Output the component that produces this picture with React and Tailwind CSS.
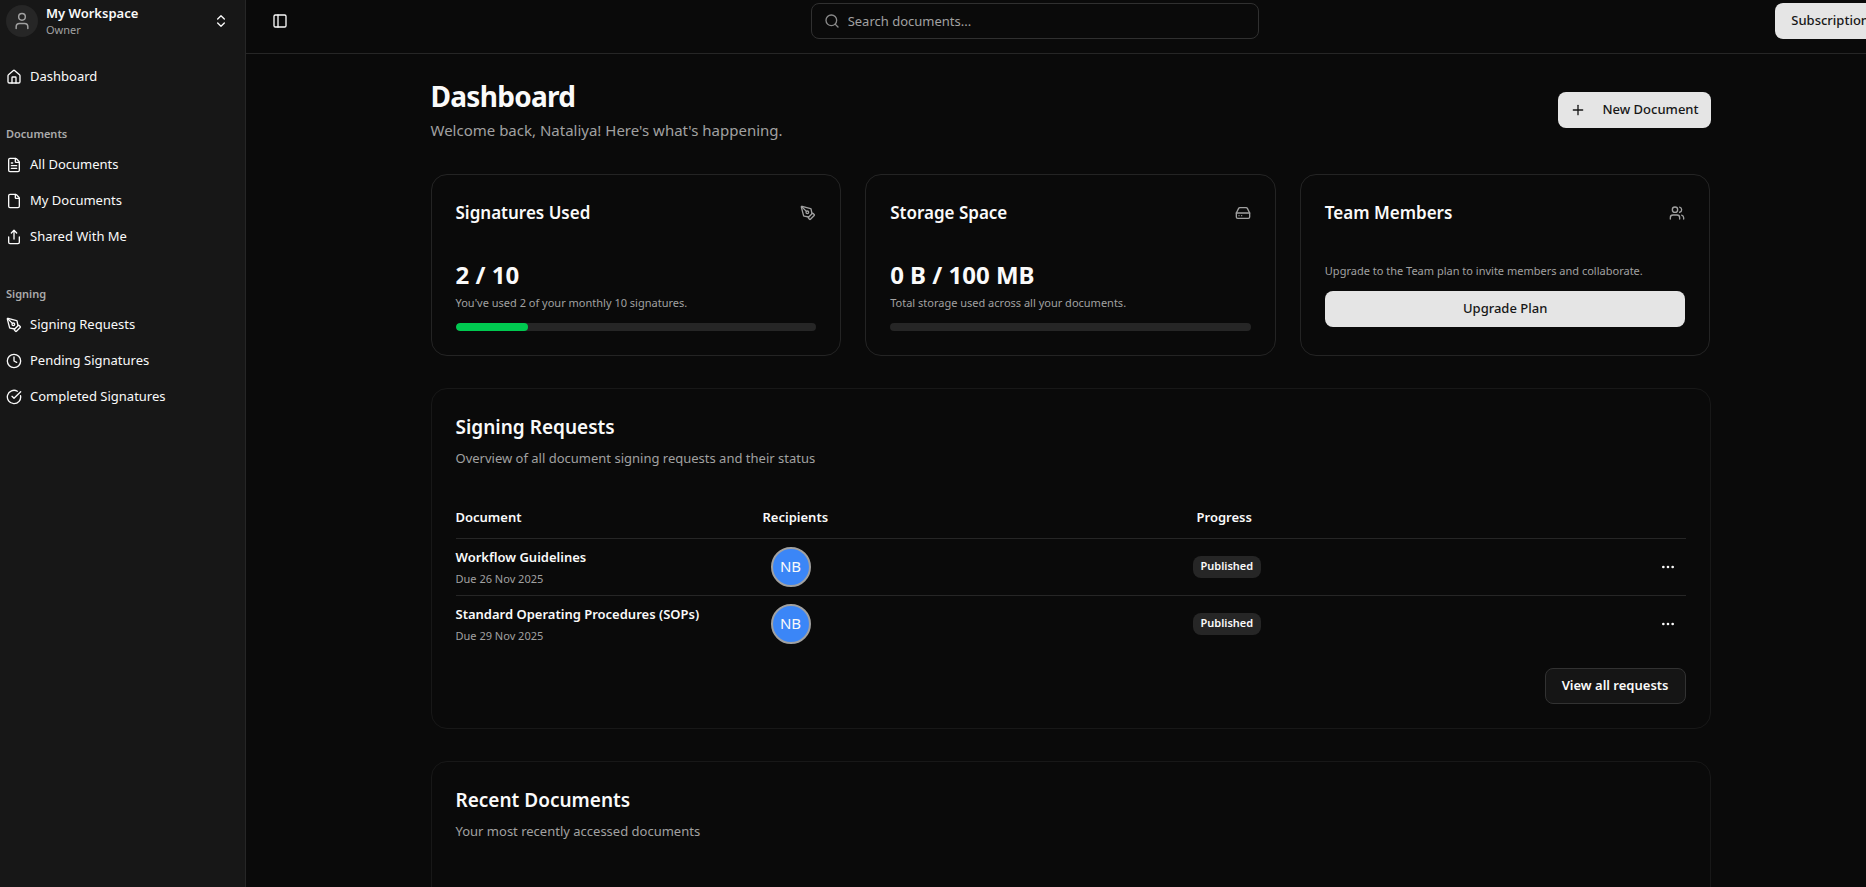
import React from "react";
import {
  ChevronsUpDown,
  CircleCheckBig,
  Clock,
  Ellipsis,
  File,
  FileText,
  HardDrive,
  House,
  PanelLeft,
  PenTool,
  Plus,
  Search,
  Share,
  User,
  Users,
} from "lucide-react";

const navGroups = [
  { label: "", items: [{ name: "Dashboard", icon: House }] },
  {
    label: "Documents",
    items: [
      { name: "All Documents", icon: FileText },
      { name: "My Documents", icon: File },
      { name: "Shared With Me", icon: Share },
    ],
  },
  {
    label: "Signing",
    items: [
      { name: "Signing Requests", icon: PenTool },
      { name: "Pending Signatures", icon: Clock },
      { name: "Completed Signatures", icon: CircleCheckBig },
    ],
  },
];

const requests = [
  { id: 1, name: "Workflow Guidelines", due: "26 Nov 2025", recipient: "NB", status: "Published" },
  { id: 2, name: "Standard Operating Procedures (SOPs)", due: "29 Nov 2025", recipient: "NB", status: "Published" },
];

function Sidebar() {
  return (
    <aside className="w-[246px] shrink-0 border-r border-[#262626] bg-[#171717] px-1.5 text-neutral-50">
      <button type="button" className="flex w-full items-center gap-2 pt-1 pr-2.5 text-left">
        <span className="flex size-8 items-center justify-center rounded-full bg-[#262626]">
          <User className="size-5 text-[#a1a1a1]" strokeWidth={1.75} />
        </span>
        <span className="flex-1">
          <span className="block text-[13px] leading-[18px] font-semibold">My Workspace</span>
          <span className="block text-[11px] leading-4 text-[#a1a1a1]">Owner</span>
        </span>
        <ChevronsUpDown className="size-4" />
      </button>

      <nav className="mt-[21px] flex flex-col gap-[26px]">
        {navGroups.map((group) => (
          <div key={group.label}>
            {group.label && (
              <h2 className="h-[26px] text-[11px] leading-[26px] font-semibold text-[#ababab]">{group.label}</h2>
            )}
            <ul>
              {group.items.map(({ name, icon: Icon }) => (
                <li key={name}>
                  <a href="#" className="flex h-9 items-center gap-2 text-[13px]">
                    <Icon className="size-4" />
                    {name}
                  </a>
                </li>
              ))}
            </ul>
          </div>
        ))}
      </nav>
    </aside>
  );
}

function Header() {
  return (
    <header className="flex h-[54px] items-start justify-between border-b border-[#262626] pt-[3px] pr-2.5 pl-5">
      <button type="button" aria-label="Toggle sidebar" className="flex h-9 w-7 items-center justify-center">
        <PanelLeft className="size-4" />
      </button>
      <label className="flex h-9 w-full max-w-md items-center gap-2 rounded-lg border border-[#303030] px-3">
        <Search className="size-4 text-[#8a8a8a]" />
        <input
          type="text"
          aria-label="Search documents"
          placeholder="Search documents..."
          className="flex-1 bg-transparent pt-0.5 text-[13px] outline-none placeholder:text-[#a1a1a1]"
        />
      </label>
      <button type="button" className="h-9 rounded-lg bg-neutral-200 px-4 text-[13px] font-medium text-neutral-900">
        Subscription
      </button>
    </header>
  );
}

function StatCard({ title, icon: Icon, children }) {
  return (
    <section className="rounded-2xl border border-[#242424] p-6">
      <div className="mb-8 flex items-center justify-between">
        <h2 className="text-[17px] leading-7 font-semibold">{title}</h2>
        <Icon className="size-4 text-[#a1a1a1]" />
      </div>
      {children}
    </section>
  );
}

function Usage({ value, note, percent }) {
  return (
    <>
      <p className="text-2xl leading-8 font-bold">{value}</p>
      <p className="mt-1 text-[11px] leading-4 text-[#a1a1a1]">{note}</p>
      <div className="mt-3 h-2 overflow-hidden rounded-full bg-[#262626]">
        <div className="h-full rounded-full bg-[#00c950]" style={{ width: `${percent}%` }} />
      </div>
    </>
  );
}

function Panel({ title, subtitle, children }) {
  return (
    <section className="mt-8 rounded-2xl border border-[#181818] p-6">
      <h2 className="text-[19px] leading-7 font-semibold">{title}</h2>
      <p className="mt-[7px] text-[13px] leading-5 text-[#a1a1a1]">{subtitle}</p>
      {children}
    </section>
  );
}

function RequestsTable() {
  return (
    <table className="mt-[29px] w-full table-fixed text-left text-[13px]">
      <thead>
        <tr className="h-[41px] border-b border-[#262626]">
          <th className="w-[299px] font-semibold">Document</th>
          <th className="w-[434px] px-2 font-semibold">Recipients</th>
          <th className="px-2 font-semibold">Progress</th>
          <th className="w-12" aria-label="Actions"></th>
        </tr>
      </thead>
      <tbody>
        {requests.map((r) => (
          <tr key={r.id} className="border-b border-[#262626] last:border-0">
            <td className="py-2">
              <p className="leading-5 font-semibold whitespace-nowrap">{r.name}</p>
              <p className="mt-1 text-[11px] leading-4 text-[#a1a1a1]">Due {r.due}</p>
            </td>
            <td className="px-4 py-2">
              <span className="flex size-10 items-center justify-center rounded-full border-2 border-[#a1a1a1] bg-[#3b86f7] text-[15px]">
                {r.recipient}
              </span>
            </td>
            <td className="px-1 py-2">
              <span className="inline-flex h-[22px] items-center rounded-lg bg-[#262626] px-2 text-[11px] font-semibold">
                {r.status}
              </span>
            </td>
            <td className="py-2">
              <button type="button" aria-label="Open menu" className="ml-auto flex size-9 items-center justify-center">
                <Ellipsis className="size-4" />
              </button>
            </td>
          </tr>
        ))}
      </tbody>
    </table>
  );
}

function App() {
  return (
    <div className="flex h-screen overflow-hidden bg-[#0a0a0a] font-['Noto_Sans','Open_Sans',sans-serif] text-neutral-50">
      <Sidebar />
      {/* the content area runs a little past the right edge of the window */}
      <div className="-mr-[29px] min-w-0 flex-1">
        <Header />
        <main className="mx-auto max-w-7xl pt-6">
          <div className="flex items-center justify-between">
            <div>
              <h1 className="text-[28px] leading-9 font-bold tracking-tight">Dashboard</h1>
              <p className="mt-1 text-[15px] leading-6 text-[#a1a1a1]">
                Welcome back, Nataliya! Here's what's happening.
              </p>
            </div>
            <button
              type="button"
              className="flex h-9 items-center gap-4 rounded-lg bg-neutral-200 px-3 text-[13px] font-medium text-neutral-900"
            >
              <Plus className="size-4" />
              New Document
            </button>
          </div>

          <div className="mt-8 grid grid-cols-3 gap-6">
            <StatCard title="Signatures Used" icon={PenTool}>
              <Usage value="2 / 10" note="You've used 2 of your monthly 10 signatures." percent={20} />
            </StatCard>
            <StatCard title="Storage Space" icon={HardDrive}>
              <Usage value="0 B / 100 MB" note="Total storage used across all your documents." percent={0} />
            </StatCard>
            <StatCard title="Team Members" icon={Users}>
              <p className="pt-1 text-[11px] leading-4 text-[#a1a1a1]">
                Upgrade to the Team plan to invite members and collaborate.
              </p>
              <button
                type="button"
                className="mt-3 h-9 w-full rounded-lg bg-neutral-200 text-[13px] font-medium text-neutral-900"
              >
                Upgrade Plan
              </button>
            </StatCard>
          </div>

          <Panel title="Signing Requests" subtitle="Overview of all document signing requests and their status">
            <RequestsTable />
            <div className="mt-4 flex justify-end">
              <button
                type="button"
                className="h-9 rounded-lg border border-[#323232] bg-[#151515] px-4 text-[13px] font-semibold"
              >
                View all requests
              </button>
            </div>
          </Panel>

          <Panel title="Recent Documents" subtitle="Your most recently accessed documents">
            <div className="h-40" />
          </Panel>
        </main>
      </div>
    </div>
  );
}

export default App;
